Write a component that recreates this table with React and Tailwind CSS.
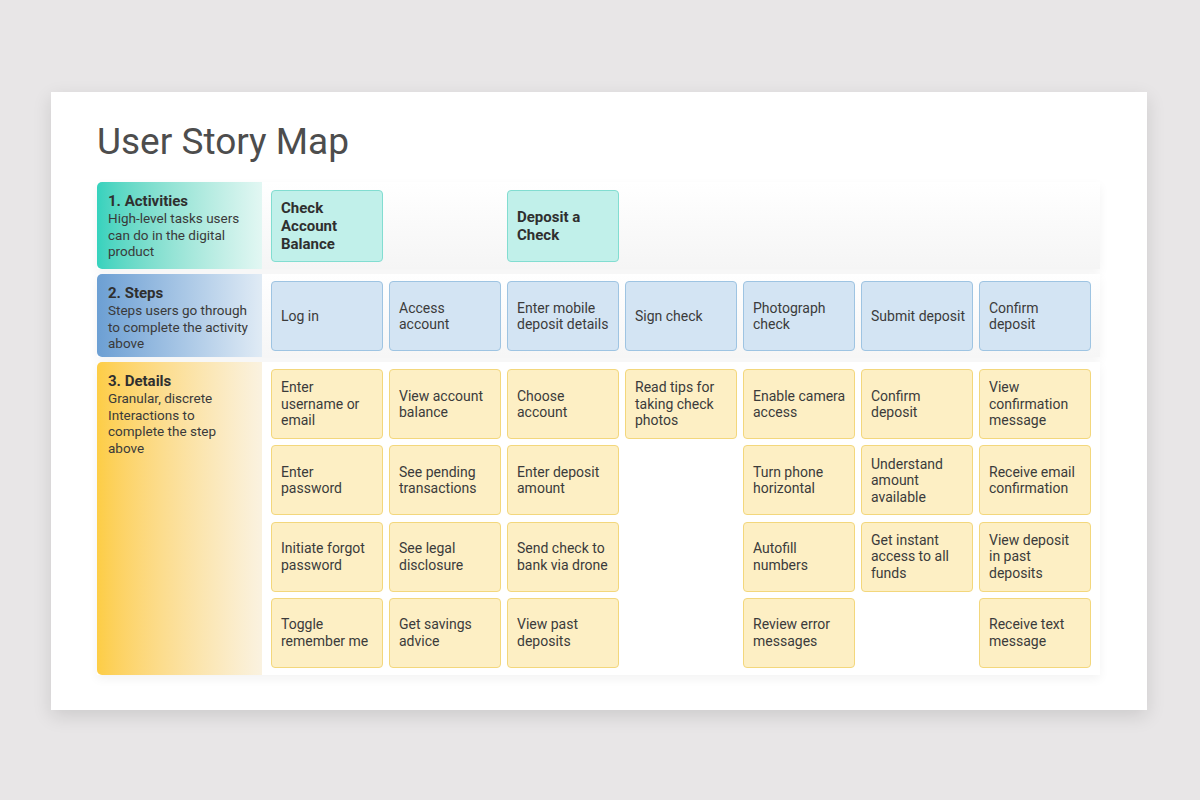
const activities = [
  { col: 1, text: 'Check\nAccount\nBalance' },
  { col: 3, text: 'Deposit a\nCheck' },
];

const steps = [
  'Log in',
  'Access\naccount',
  'Enter mobile\ndeposit details',
  'Sign check',
  'Photograph\ncheck',
  'Submit deposit',
  'Confirm\ndeposit',
];

// details per column, null = empty slot
const details = [
  ['Enter\nusername or\nemail', 'Enter\npassword', 'Initiate forgot\npassword', 'Toggle\nremember me'],
  ['View account\nbalance', 'See pending\ntransactions', 'See legal\ndisclosure', 'Get savings\nadvice'],
  ['Choose\naccount', 'Enter deposit\namount', 'Send check to\nbank via drone', 'View past\ndeposits'],
  ['Read tips for\ntaking check\nphotos', null, null, null],
  ['Enable camera\naccess', 'Turn phone\nhorizontal', 'Autofill\nnumbers', 'Review error\nmessages'],
  ['Confirm\ndeposit', 'Understand\namount\navailable', 'Get instant\naccess to all\nfunds', null],
  ['View\nconfirmation\nmessage', 'Receive email\nconfirmation', 'View deposit\nin past\ndeposits', 'Receive text\nmessage'],
];

const Label = ({ title, desc, className }) => (
  <div className={`w-[165px] shrink-0 rounded-l-[5px] pl-[11px] pr-1 pt-[10px] ${className}`}>
    <div className="text-[15px] font-bold leading-[18px] text-[#2f2f2f]">{title}</div>
    <div className="whitespace-pre text-[13.5px] leading-[16.5px] text-[#3a3a3a]">{desc}</div>
  </div>
);

const Card = ({ children, className }) => (
  <div className={`flex h-[70px] w-[112px] items-center rounded-[4px] border pl-[9px] text-[14px] leading-[16.5px] text-[#3b3b3b] ${className}`}>
    <span className="whitespace-pre">{children}</span>
  </div>
);

export default function App() {
  const rows = [0, 1, 2, 3];
  return (
    <div className="flex h-[800px] w-[1200px] items-start bg-[#e8e6e7] pl-[51px] pt-[92px]" style={{ fontFamily: 'Roboto, "Noto Sans", sans-serif' }}>
      <div className="h-[618px] w-[1096px] bg-white pl-[46px] pt-[26px] shadow-[0_6px_18px_rgba(0,0,0,0.12)]">
        <h1 className="text-[37px] font-normal leading-[48px] text-[#4d4d4d]">User Story Map</h1>

        <div className="mt-[16px] flex w-[1003px] flex-col gap-[5px]">
          {/* Activities */}
          <div className="flex h-[87px] shadow-[0_4px_10px_rgba(0,0,0,0.05)]">
            <Label
              title="1. Activities"
              desc={'High-level tasks users\ncan do in the digital\nproduct'}
              className="bg-gradient-to-r from-[#35d2bd] to-[#e2f7f3]"
            />
            <div className="flex flex-1 items-start bg-gradient-to-b from-white to-[#f5f5f5] pl-[9px] pt-[8px]">
              <div className="grid grid-cols-[repeat(7,112px)] gap-x-[6px]">
                {activities.map((a) => (
                  <div
                    key={a.text}
                    className={`flex h-[72px] items-center rounded-[4px] border border-[#82ddd1] bg-[#c1f0ea] pl-[9px] text-[15px] font-bold leading-[18px] text-[#2f2f2f] ${a.col === 1 ? 'col-start-1' : 'col-start-3'}`}
                  >
                    <span className="whitespace-pre">{a.text}</span>
                  </div>
                ))}
              </div>
            </div>
          </div>

          {/* Steps */}
          <div className="flex h-[83px] shadow-[0_4px_10px_rgba(0,0,0,0.05)]">
            <Label
              title="2. Steps"
              desc={'Steps users go through\nto complete the activity\nabove'}
              className="bg-gradient-to-r from-[#6c9fd3] to-[#e0ebf5]"
            />
            <div className="flex flex-1 items-start bg-gradient-to-b from-white to-[#f6f6f6] pl-[9px] pt-[7px]">
              <div className="grid grid-cols-[repeat(7,112px)] gap-x-[6px]">
                {steps.map((s) => (
                  <Card key={s} className="border-[#9ec4e2] bg-[#d3e4f3]">
                    {s}
                  </Card>
                ))}
              </div>
            </div>
          </div>

          {/* Details */}
          <div className="flex h-[313px] shadow-[0_4px_10px_rgba(0,0,0,0.05)]">
            <Label
              title="3. Details"
              desc={'Granular, discrete\nInteractions to\ncomplete the step\nabove'}
              className="bg-gradient-to-r from-[#fdcd45] to-[#faf2e0]"
            />
            <div className="flex-1 bg-white pl-[9px] pt-[7px]">
              <div className="grid grid-cols-[repeat(7,112px)] grid-rows-[repeat(4,70px)] gap-x-[6px] gap-y-[6.3px]">
                {rows.map((r) =>
                  details.map((col, c) =>
                    col[r] ? (
                      <Card key={`${r}-${c}`} className="border-[#f3d77c] bg-[#fdefc4]">
                        {col[r]}
                      </Card>
                    ) : (
                      <div key={`${r}-${c}`} />
                    )
                  )
                )}
              </div>
            </div>
          </div>
        </div>
      </div>
    </div>
  );
}
